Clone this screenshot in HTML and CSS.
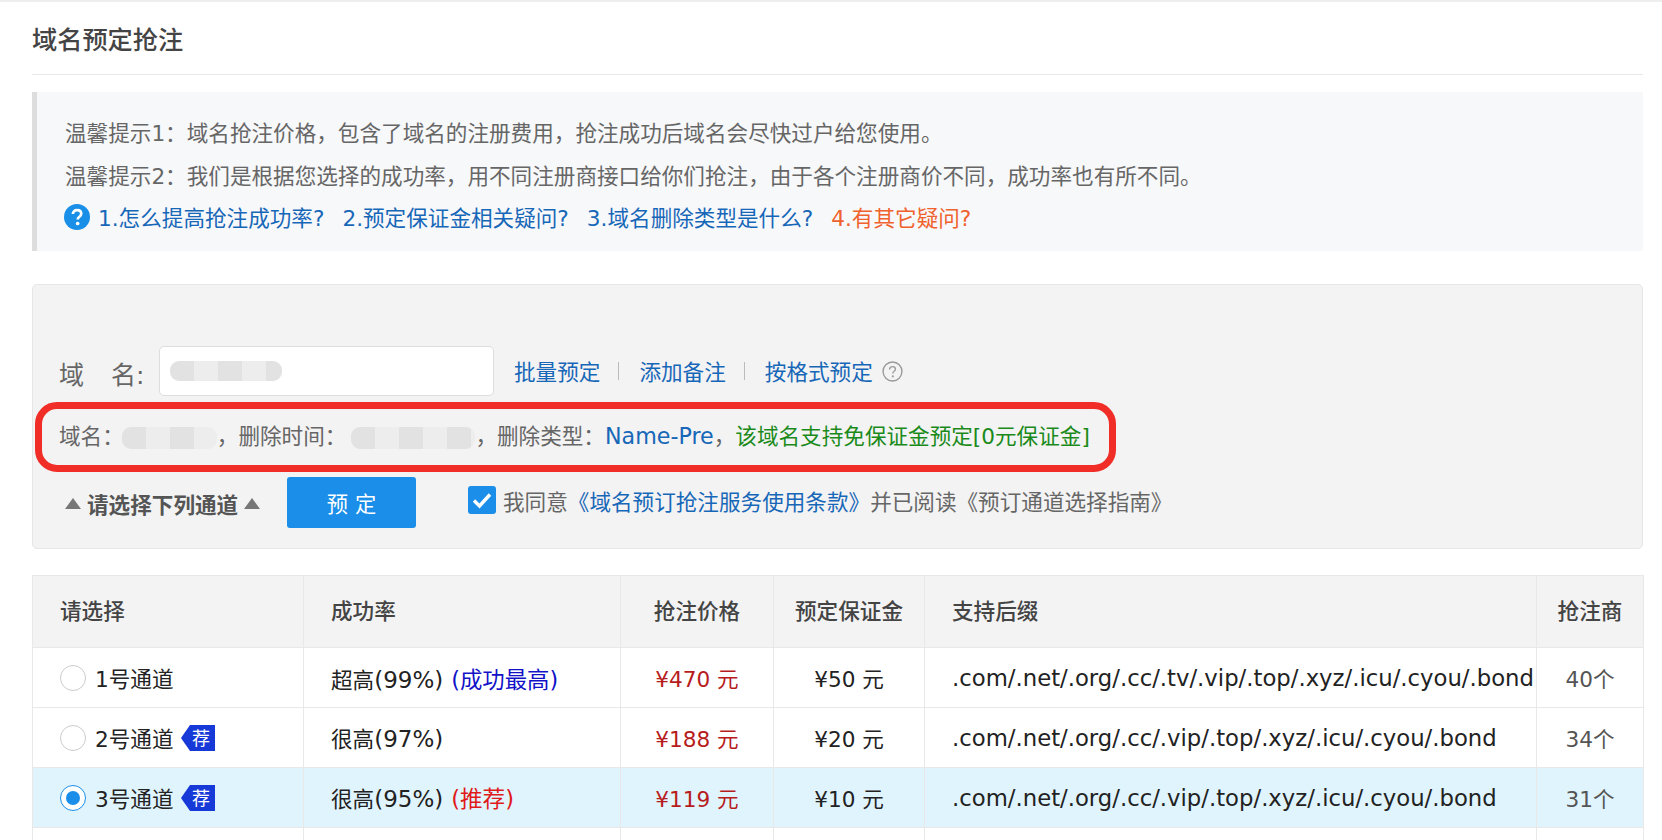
FILE: index.html
```html
<!DOCTYPE html>
<html lang="zh-CN">
<head>
<meta charset="utf-8">
<title>域名预定抢注</title>
<link rel="stylesheet" href="styles.css">
</head>
<body>
<div class="page">
  <h1 class="title">域名预定抢注</h1>
  <div class="tips">
    <p class="tip">温馨提示1：域名抢注价格，包含了域名的注册费用，抢注成功后域名会尽快过户给您使用。</p>
    <p class="tip">温馨提示2：我们是根据您选择的成功率，用不同注册商接口给你们抢注，由于各个注册商价不同，成功率也有所不同。</p>
    <p class="tip-links">
      <svg class="help-solid" viewBox="0 0 24 24"><circle cx="12" cy="12" r="12" fill="#1a8fe8"/><path d="M8.2 9.3c0-2.3 1.7-3.7 3.9-3.7s3.8 1.3 3.8 3.3c0 1.5-.8 2.3-1.9 3.1-1 .7-1.3 1.1-1.3 2.2" fill="none" stroke="#fff" stroke-width="2.5"/><circle cx="12.6" cy="18" r="1.7" fill="#fff"/></svg>
      <a class="link">1.怎么提高抢注成功率?</a>
      <a class="link">2.预定保证金相关疑问?</a>
      <a class="link">3.域名删除类型是什么?</a>
      <a class="link-orange">4.有其它疑问?</a>
    </p>
  </div>

  <div class="form">
    <div class="row-domain">
      <span class="label">域<span class="label-gap"></span>名:</span>
      <div class="input"><span class="blur blur-input"></span></div>
      <a class="link action">批量预定</a><span class="sep"></span>
      <a class="link action">添加备注</a><span class="sep"></span>
      <a class="link action">按格式预定</a>
      <svg class="help-line" viewBox="0 0 20 20"><circle cx="10" cy="10" r="9" fill="none" stroke="#999" stroke-width="1.3"/><path d="M7.2 8c0-1.7 1.2-2.7 2.8-2.7s2.8 1 2.8 2.4c0 1.1-.6 1.7-1.4 2.3-.8.5-1.1.9-1.1 1.8" fill="none" stroke="#999" stroke-width="1.3"/><circle cx="10.3" cy="14.6" r="1" fill="#999"/></svg>
    </div>
    <div class="row-info">
      域名：<span class="blur blur-a"></span>，删除时间：<span class="blur blur-b"></span>，删除类型：<a class="link name">Name-Pre</a>，<span class="green">该域名支持免保证金预定[0元保证金]</span>
    </div>
    <div class="mark"></div>
    <div class="row-submit">
      <span class="pick"><i class="tri"></i>请选择下列通道<i class="tri"></i></span>
      <button class="btn" type="button">预 定</button>
      <span class="check"><svg viewBox="0 0 28 28"><path d="M6 14.5l5.5 5.5L22 8.5" fill="none" stroke="#fff" stroke-width="3.4"/></svg></span>
      <span class="agree">我同意<a class="link">《域名预订抢注服务使用条款》</a>并已阅读《预订通道选择指南》</span>
    </div>
  </div>

  <table class="grid">
    <colgroup><col class="c1"><col class="c2"><col class="c3"><col class="c4"><col class="c5"><col class="c6"></colgroup>
    <thead>
      <tr><th>请选择</th><th>成功率</th><th class="mid">抢注价格</th><th class="mid">预定保证金</th><th>支持后缀</th><th class="mid">抢注商</th></tr>
    </thead>
    <tbody>
      <tr>
        <td><span class="chan"><i class="radio"></i>1号通道</span></td>
        <td>超高<span class="lat">(99%)</span> <span class="blue">(成功最高)</span></td>
        <td class="mid price">¥470 元</td><td class="mid">¥50 元</td>
        <td class="suffix">.com/.net/.org/.cc/.tv/.vip/.top/.xyz/.icu/.cyou/.bond</td>
        <td class="mid count">40个</td>
      </tr>
      <tr>
        <td><span class="chan"><i class="radio"></i>2号通道<svg class="rec" viewBox="0 0 34 26"><path d="M9 0h25v26H9L0 13z" fill="#1739d8"/><text x="20" y="20" class="rec-text">荐</text></svg></span></td>
        <td>很高<span class="lat">(97%)</span></td>
        <td class="mid price">¥188 元</td><td class="mid">¥20 元</td>
        <td class="suffix">.com/.net/.org/.cc/.vip/.top/.xyz/.icu/.cyou/.bond</td>
        <td class="mid count">34个</td>
      </tr>
      <tr class="on">
        <td><span class="chan"><i class="radio radio-on"></i>3号通道<svg class="rec" viewBox="0 0 34 26"><path d="M9 0h25v26H9L0 13z" fill="#1739d8"/><text x="20" y="20" class="rec-text">荐</text></svg></span></td>
        <td>很高<span class="lat">(95%)</span> <span class="red">(推荐)</span></td>
        <td class="mid price">¥119 元</td><td class="mid">¥10 元</td>
        <td class="suffix">.com/.net/.org/.cc/.vip/.top/.xyz/.icu/.cyou/.bond</td>
        <td class="mid count">31个</td>
      </tr>
      <tr class="cut"><td></td><td></td><td></td><td></td><td></td><td></td></tr>
    </tbody>
  </table>
</div>
</body>
</html>
```
FILE: styles.css
```css
* { box-sizing: border-box; }
html, body { margin: 0; height: 840px; overflow: hidden; background: #fff; }
body { font-family: "DejaVu Sans", "Noto Sans CJK SC", sans-serif; font-size: 21.6px; color: #333; }
.page { border-top: 2px solid #eee; padding: 0 19px 0 32px; }
.title { margin: 0; height: 73px; line-height: 78px; font-size: 25.2px; font-weight: 500; color: #444; border-bottom: 1px solid #e8e8e8; }
.tips { margin-top: 17px; height: 159px; background: #f7f8fa; border-left: 5px solid #ddd; padding: 20px 0 0 28px; color: #666; }
.tip { margin: 0; height: 43px; line-height: 43px; white-space: nowrap; }
.tip-links { margin: 0; display: flex; align-items: center; height: 37px; gap: 18px; }
.help-solid { width: 26px; height: 26px; margin-left: -1px; margin-right: -10px; margin-top: 1px; flex: none; }
.link { color: #1767b8; }
.link-orange { color: #f0622d; }
.form { position: relative; margin-top: 33px; height: 265px; background: #f3f3f3; border: 1px solid #e6e6e6; border-radius: 5px; padding: 61px 0 0 26px; color: #666; }
.row-domain { display: flex; align-items: center; height: 50px; }
.label { width: 100px; font-size: 25px; padding-top: 3px; white-space: nowrap; }
.label-gap { display: inline-block; width: 27px; }
.input { width: 335px; height: 50px; background: #fff; border: 1px solid #ddd; border-radius: 5px; padding: 14px 0 0 10px; margin-right: 20px; }
.action { white-space: nowrap; position: relative; top: -1px; }
.blur { display: inline-block; background: repeating-linear-gradient(90deg, #e2e2e2 0 24px, #ededed 24px 48px); border-radius: 9px; vertical-align: middle; }
.blur-input { width: 112px; height: 20px; display: block; }
.sep { width: 1px; height: 18px; background: #bbb; margin: 0 20px 0 18px; }
.help-line { width: 21px; height: 21px; margin-left: 9px; }
.row-info { margin-top: 12px; height: 56px; line-height: 56px; white-space: nowrap; }
.blur-a { width: 95px; height: 22px; margin-left: -2px; }
.blur-b { width: 124px; height: 22px; margin-left: 5px; }
.name { font-size: 22.2px; }
.green { color: #1a8a1a; }
.mark { position: absolute; left: 2px; top: 117px; width: 1081px; height: 70px; border: 7px solid #f02d26; border-radius: 22px; pointer-events: none; }
.row-submit { display: flex; align-items: center; margin-top: 12px; height: 52px; }
.pick { display: flex; align-items: center; gap: 6px; width: 228px; padding-left: 6px; font-weight: 700; color: #555; margin-top: 2px; }
.tri { width: 0; height: 0; border-left: 8px solid transparent; border-right: 8px solid transparent; border-bottom: 11px solid #777; }
.btn { width: 129px; height: 51px; border: 0; border-radius: 3px; background: #1a8ee8; color: #fff; font: inherit; font-size: 21.3px; }
.check { width: 28px; height: 28px; margin: -4px 7px 0 52px; background: #1a8ee8; border-radius: 3px; display: block; }
.check svg { display: block; }
.agree { margin-top: -3px; white-space: nowrap; }
.grid { margin-top: 26px; width: 1611px; table-layout: fixed; border-collapse: collapse; color: #222; }
.c1 { width: 271px; } .c2 { width: 317px; } .c3 { width: 153px; } .c4 { width: 151px; } .c5 { width: 612px; } .c6 { width: 107px; }
.grid th, .grid td { border: 1px solid #e8e8e8; padding: 0 0 0 27px; text-align: left; white-space: nowrap; overflow: hidden; }
.grid th { height: 72px; padding-bottom: 4px; background: #f3f3f3; font-weight: 500; color: #444; }
.grid th.mid { padding: 0 0 4px; }
.grid td { height: 60px; }
.grid .mid { text-align: center; padding: 0; }
.grid .suffix { font-size: 22.75px; }
.lat { font-size: 23px; }
.chan { display: flex; align-items: center; }
.radio { width: 26px; height: 26px; border: 1px solid #ccc; border-radius: 50%; background: #fff; margin-right: 9px; flex: none; }
.radio-on { border-color: #1a8ee8; position: relative; }
.radio-on::after { content: ""; position: absolute; left: 5px; top: 5px; width: 14px; height: 14px; background: #1a8ee8; border-radius: 50%; }
.rec { width: 34px; height: 26px; margin-left: 7px; }
.rec-text { font-size: 18px; fill: #fff; text-anchor: middle; }
.blue { color: #1212c8; font-size: 22.4px; margin-left: 1px; }
.red { color: #e01a1a; font-size: 22.6px; margin-left: 1px; }
.price { color: #b71c1c; }
.count { color: #555; }
.on td { background: #e0f4fe; }
.cut td { height: 20px; }
```
